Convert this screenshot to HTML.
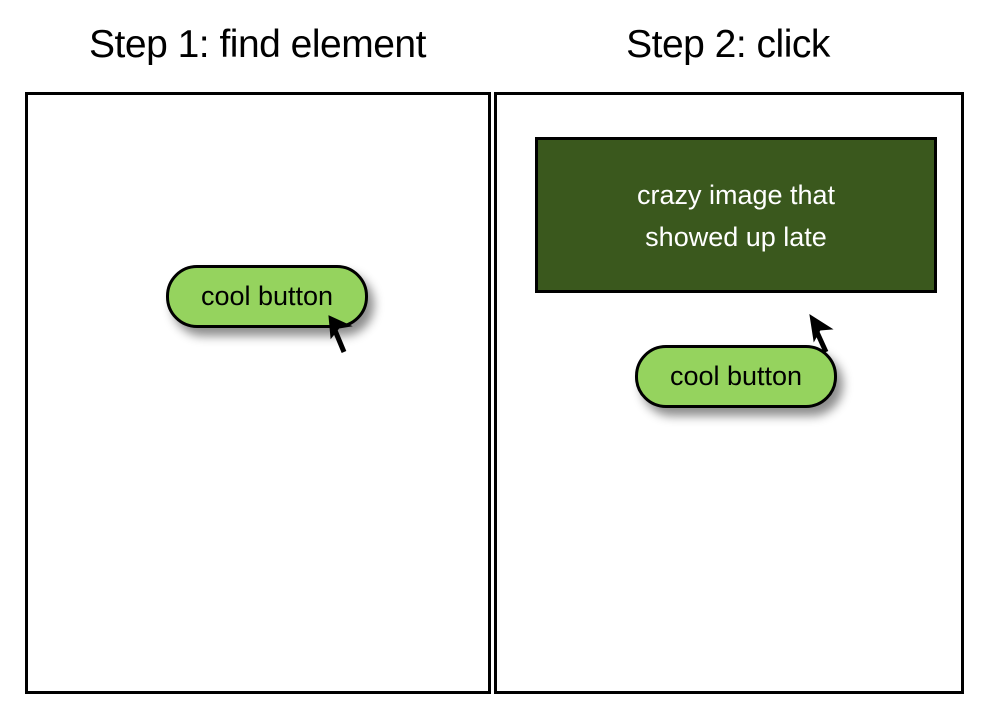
<!DOCTYPE html>
<html><head><style>
body{margin:0;width:988px;height:722px;background:#fff;position:relative;font-family:"Liberation Sans",sans-serif;overflow:hidden}
.t{position:absolute;top:23px;font-size:39px;color:#000;text-align:center;letter-spacing:-0.5px}
.p{position:absolute;top:92px;height:596px;border:3px solid #000;box-sizing:content-box}
.btn{position:absolute;width:196px;height:57px;border:3px solid #000;border-radius:31px;background:#95d35e;font-size:27px;text-align:center;line-height:57px;box-shadow:6px 8px 10px rgba(0,0,0,.45)}
.g{position:absolute;left:535px;top:137px;width:396px;height:150px;background:#3a581d;border:3px solid #000;color:#fff;font-size:27px;text-align:center;line-height:42px;box-sizing:content-box}
</style></head><body>
<div class="t" style="left:25px;width:465px">Step 1: find element</div>
<div class="t" style="left:495px;width:466px">Step 2: click</div>
<div class="p" style="left:25px;width:460px"></div>
<div class="p" style="left:494px;width:464px"></div>
<div class="btn" style="left:166px;top:265px">cool button</div>
<div class="btn" style="left:635px;top:345px">cool button</div>
<div class="g"><div style="padding-top:34px">crazy image that<br>showed up late</div></div>
<svg width="988" height="722" style="position:absolute;left:0;top:0">
<g fill="#000" stroke="#000">
<line x1="344" y1="352" x2="334" y2="328" stroke-width="5"/>
<polygon points="329,316 351,326 339,328 331,338" />
<line x1="826" y1="352" x2="816" y2="330" stroke-width="5"/>
<polygon points="810,315 832,329 820,330 814,341" />
</g></svg>
</body></html>
